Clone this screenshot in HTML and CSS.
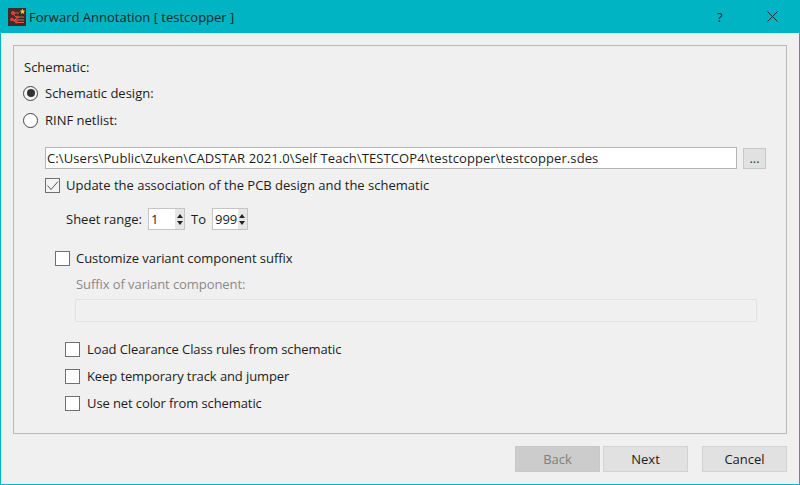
FILE: index.html
```html
<!DOCTYPE html>
<html lang="en">
<head>
<meta charset="utf-8">
<title>Forward Annotation</title>
<link rel="stylesheet" href="styles.css">
</head>
<body>
<div class="window">
  <header class="titlebar">
    <svg class="appicon" width="18" height="18" viewBox="0 0 18 18">
      <rect width="18" height="18" fill="#3d2c2c"/>
      <path d="M4 5L8 9H16M4 12H16M9 9L6 14M10 14.5H16M5 5H11" fill="none" stroke="#e2604e" stroke-width="1"/>
      <circle cx="5" cy="5" r="2" fill="#ea3f2f"/><circle cx="4" cy="11.5" r="1.8" fill="#ea3f2f"/><circle cx="9.5" cy="9" r="1.5" fill="#ea3f2f"/><circle cx="8.5" cy="14" r="1.5" fill="#ea3f2f"/>
      <path d="M14.5 0.8l.9 1.7 1.8.3-1.3 1.3.3 1.8-1.7-.9-1.7.9.3-1.8-1.3-1.3 1.8-.3z" fill="#f2c230"/>
    </svg>
    <span class="title">Forward Annotation [ testcopper ]</span>
    <span class="help">?</span>
    <svg class="close" width="11" height="11" viewBox="0 0 11 11"><path d="M.5.5L10.5 10.5M10.5.5L.5 10.5" stroke="#1a2a2c" stroke-width="1" fill="none"/></svg>
  </header>
  <main class="content">
    <section class="panel">
      <div class="label-row">Schematic:</div>
      <label class="radio-row first"><span class="radio checked"></span>Schematic design:</label>
      <label class="radio-row second"><span class="radio"></span>RINF netlist:</label>
      <div class="path-row">
        <div class="input path">C:\Users\Public\Zuken\CADSTAR 2021.0\Self Teach\TESTCOP4\testcopper\testcopper.sdes</div>
        <button class="browse">...</button>
      </div>
      <label class="check-row update"><span class="check checked">
        <svg width="13" height="13" viewBox="0 0 13 13"><path d="M1.5 6.5L5 10.5L12 2.5" fill="none" stroke="#555" stroke-width="1"/></svg>
      </span>Update the association of the PCB design and the schematic</label>
      <div class="sheet-row">
        <span>Sheet range:</span>
        <div class="spin one"><span class="spin-val">1</span><span class="arrows"><i class="up"></i><i class="down"></i></span></div>
        <span class="to">To</span>
        <div class="spin two"><span class="spin-val">999</span><span class="arrows"><i class="up"></i><i class="down"></i></span></div>
      </div>
      <label class="check-row custom"><span class="check"></span>Customize variant component suffix</label>
      <div class="suffix-label">Suffix of variant component:</div>
      <div class="suffix-input"></div>
      <label class="check-row opt opt-first"><span class="check"></span>Load Clearance Class rules from schematic</label>
      <label class="check-row opt"><span class="check"></span>Keep temporary track and jumper</label>
      <label class="check-row opt"><span class="check"></span>Use net color from schematic</label>
    </section>
    <footer class="buttons">
      <button class="btn disabled">Back</button>
      <button class="btn next">Next</button>
      <button class="btn cancel">Cancel</button>
    </footer>
  </main>
</div>
</body>
</html>
```
FILE: styles.css
```css
* { box-sizing: border-box; }
html, body { margin: 0; height: 100%; }
body { font-family: "Open Sans", "Noto Sans", sans-serif; font-size: 13px; color: #1c1c1c; background: #f0f0f0; overflow: hidden; }
.window { width: 800px; height: 485px; display: flex; flex-direction: column; border: 1px solid #00b4c3; border-top: 0; background: #f0f0f0; }
.titlebar { height: 33px; margin: 0 -1px; background: #00b4c3; display: flex; align-items: center; padding-left: 8px; flex: none; }
.appicon { flex: none; }
.title { margin-left: 3px; font-size: 13px; color: #10282b; flex: 1; }
.help { font-size: 13px; color: #10282b; width: 14px; margin-right: 36px; }
.close { margin-right: 22px; }
.content { flex: 1; display: flex; flex-direction: column; padding: 12px 12px 13px; }
.panel { height: 389px; border: 1px solid #b9b9b9; padding: 0 20px 0 9px; display: flex; flex-direction: column; flex: none; }
.label-row { line-height: 18px; margin-top: 12px; margin-left: 1px; }
.radio-row, .check-row { display: flex; align-items: center; line-height: 18px; }
.radio-row { height: 18px; }
.radio-row.first { margin-top: 8px; }
.radio-row.second { margin-top: 9px; }
.radio { width: 15px; height: 15px; border: 1px solid #444; border-radius: 50%; background: #fff; margin-right: 7px; position: relative; flex: none; }
.radio.checked { background: #f6f6f6; }
.radio.checked::after { content: ""; position: absolute; left: 2.5px; top: 2.5px; width: 8px; height: 8px; border-radius: 50%; background: #333; }
.path-row { display: flex; align-items: center; margin-top: 18px; margin-left: 22px; }
.input.path { width: 693px; height: 22px; border: 1px solid #b5b5b5; background: #fff; line-height: 20px; padding-left: 1px; white-space: nowrap; overflow: hidden; letter-spacing: 0.09px; }
.browse { width: 23px; height: 21px; margin-left: 6px; border: 1px solid #c6c6c6; background: #e1e1e1; font: inherit; color: #333; padding: 0; line-height: 16px; }
.check { width: 15px; height: 15px; border: 1px solid #707070; background: #fff; margin-right: 6px; flex: none; display: flex; align-items: center; justify-content: center; }
.check.checked { background: #f4f4f4; }
.update { margin-top: 7px; margin-left: 22px; height: 18px; }
.sheet-row { display: flex; align-items: center; margin-top: 14px; margin-left: 43px; height: 22px; }
.spin { height: 22px; display: flex; background: #fff; border: 1px solid #c4c4c4; margin-left: 6px; }
.spin.one { width: 37px; }
.spin.two { width: 36px; margin-left: 6px; }
.spin-val { flex: 1; line-height: 20px; padding-left: 2px; }
.arrows { width: 9px; background: #e6e6e6; display: flex; flex-direction: column; align-items: center; justify-content: center; gap: 3px; flex: none; }
.up { border: 3px solid transparent; border-top: 0; border-bottom: 4px solid #222; }
.down { border: 3px solid transparent; border-bottom: 0; border-top: 4px solid #222; }
.to { margin-left: 6px; }
.custom { margin-top: 19px; margin-left: 32px; height: 18px; letter-spacing: -0.06px; }
.suffix-label { color: #8a8a8a; margin-top: 8px; margin-left: 53px; line-height: 18px; letter-spacing: -0.08px; }
.suffix-input { height: 23px; margin-left: 52px; width: 682px; margin-top: 6px; border: 1px solid #e2e2e2; background: #f0f0f0; border-radius: 1px; }
.opt { margin-left: 42px; height: 18px; margin-top: 9px; letter-spacing: -0.1px; }
.opt .check { margin-right: 7px; }
.opt-first { margin-top: 18px; }
.buttons { display: flex; margin-top: 12px; padding-left: 502px; }
.btn { width: 85px; height: 26px; border: 1px solid #d2d2d2; background: #e1e1e1; font: inherit; font-size: 13px; color: #1c1c1c; padding: 0; }
.btn.disabled { background: #cccccc; border-color: #c8c8c8; color: #808080; }
.next { margin-left: 3px; }
.cancel { margin-left: 14px; }
```
